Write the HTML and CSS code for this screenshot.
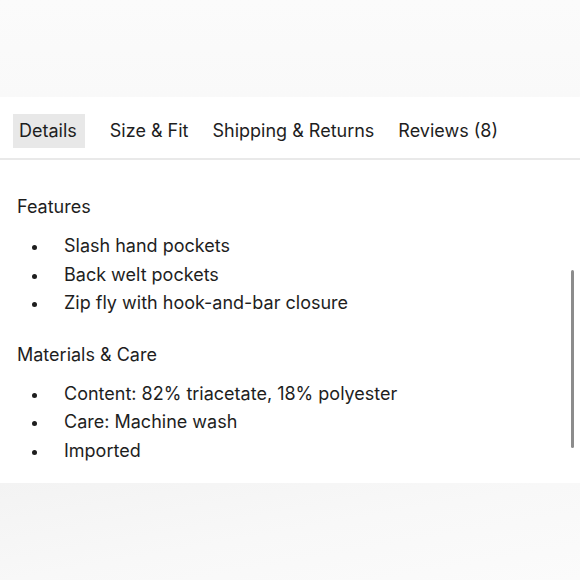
FILE: index.html
```html
<!DOCTYPE html>
<html>
<head>
<meta charset="utf-8">
<link rel="stylesheet" href="styles.css">
</head>
<body>
<div class="page">
  <div class="band-top"></div>
  <div class="panel">
    <nav class="tabs">
      <span class="tab active">Details</span>
      <span class="tab">Size &amp; Fit</span>
      <span class="tab">Shipping &amp; Returns</span>
      <span class="tab">Reviews (8)</span>
    </nav>
    <div class="content">
      <h3 class="heading">Features</h3>
      <ul class="list">
        <li>Slash hand pockets</li>
        <li>Back welt pockets</li>
        <li>Zip fly with hook-and-bar closure</li>
      </ul>
      <h3 class="heading">Materials &amp; Care</h3>
      <ul class="list">
        <li>Content: 82% triacetate, 18% polyester</li>
        <li>Care: Machine wash</li>
        <li>Imported</li>
      </ul>
    </div>
    <div class="scrollbar"></div>
  </div>
  <div class="band-bottom"></div>
</div>
</body>
</html>
```
FILE: styles.css
```css
* { box-sizing: border-box; }
html, body { margin: 0; padding: 0; }
body {
  font-family: Inter, "Noto Sans", sans-serif;
  color: #1e1e1e;
  background: #fff;
}
.page {
  width: 580px;
  height: 580px;
  display: flex;
  flex-direction: column;
  overflow: hidden;
}
.band-top {
  height: 97px;
  background: linear-gradient(180deg, #fbfbfb, #f9f9f9);
  flex: none;
}
.panel {
  position: relative;
  height: 386px;
  background: #fff;
  flex: none;
}
.tabs {
  display: flex;
  align-items: center;
  padding: 17px 0 10px 13px;
  border-bottom: 2px solid #e9e9e9;
  gap: 12px;
}
.tab {
  font-size: 18px;
  line-height: 34px;
  padding: 0 6px;
  white-space: nowrap;
}
.tab.active {
  background: #e8e8e8;
  padding: 0 8px 0 6px;
  margin-right: 7px;
}
.content {
  padding: 33px 0 0 17px;
}
.heading {
  margin: 0;
  font-size: 18px;
  font-weight: 400;
  line-height: 28px;
}
.list {
  list-style: none;
  margin: 11px 0 23px;
  padding: 0;
}
.list li {
  position: relative;
  font-size: 18px;
  line-height: 28.5px;
  padding-left: 47px;
}
.list li::before {
  content: "";
  position: absolute;
  left: 15px;
  top: 13px;
  width: 5px;
  height: 5px;
  border-radius: 50%;
  background: #1e1e1e;
}
.scrollbar {
  position: absolute;
  right: 6px;
  top: 173px;
  width: 3px;
  height: 178px;
  border-radius: 2px;
  background: #8c8c8c;
}
.band-bottom {
  flex: 1;
  background: linear-gradient(170deg, #f3f3f3 0%, #f8f8f8 50%, #fbfbfb 100%);
}
```
